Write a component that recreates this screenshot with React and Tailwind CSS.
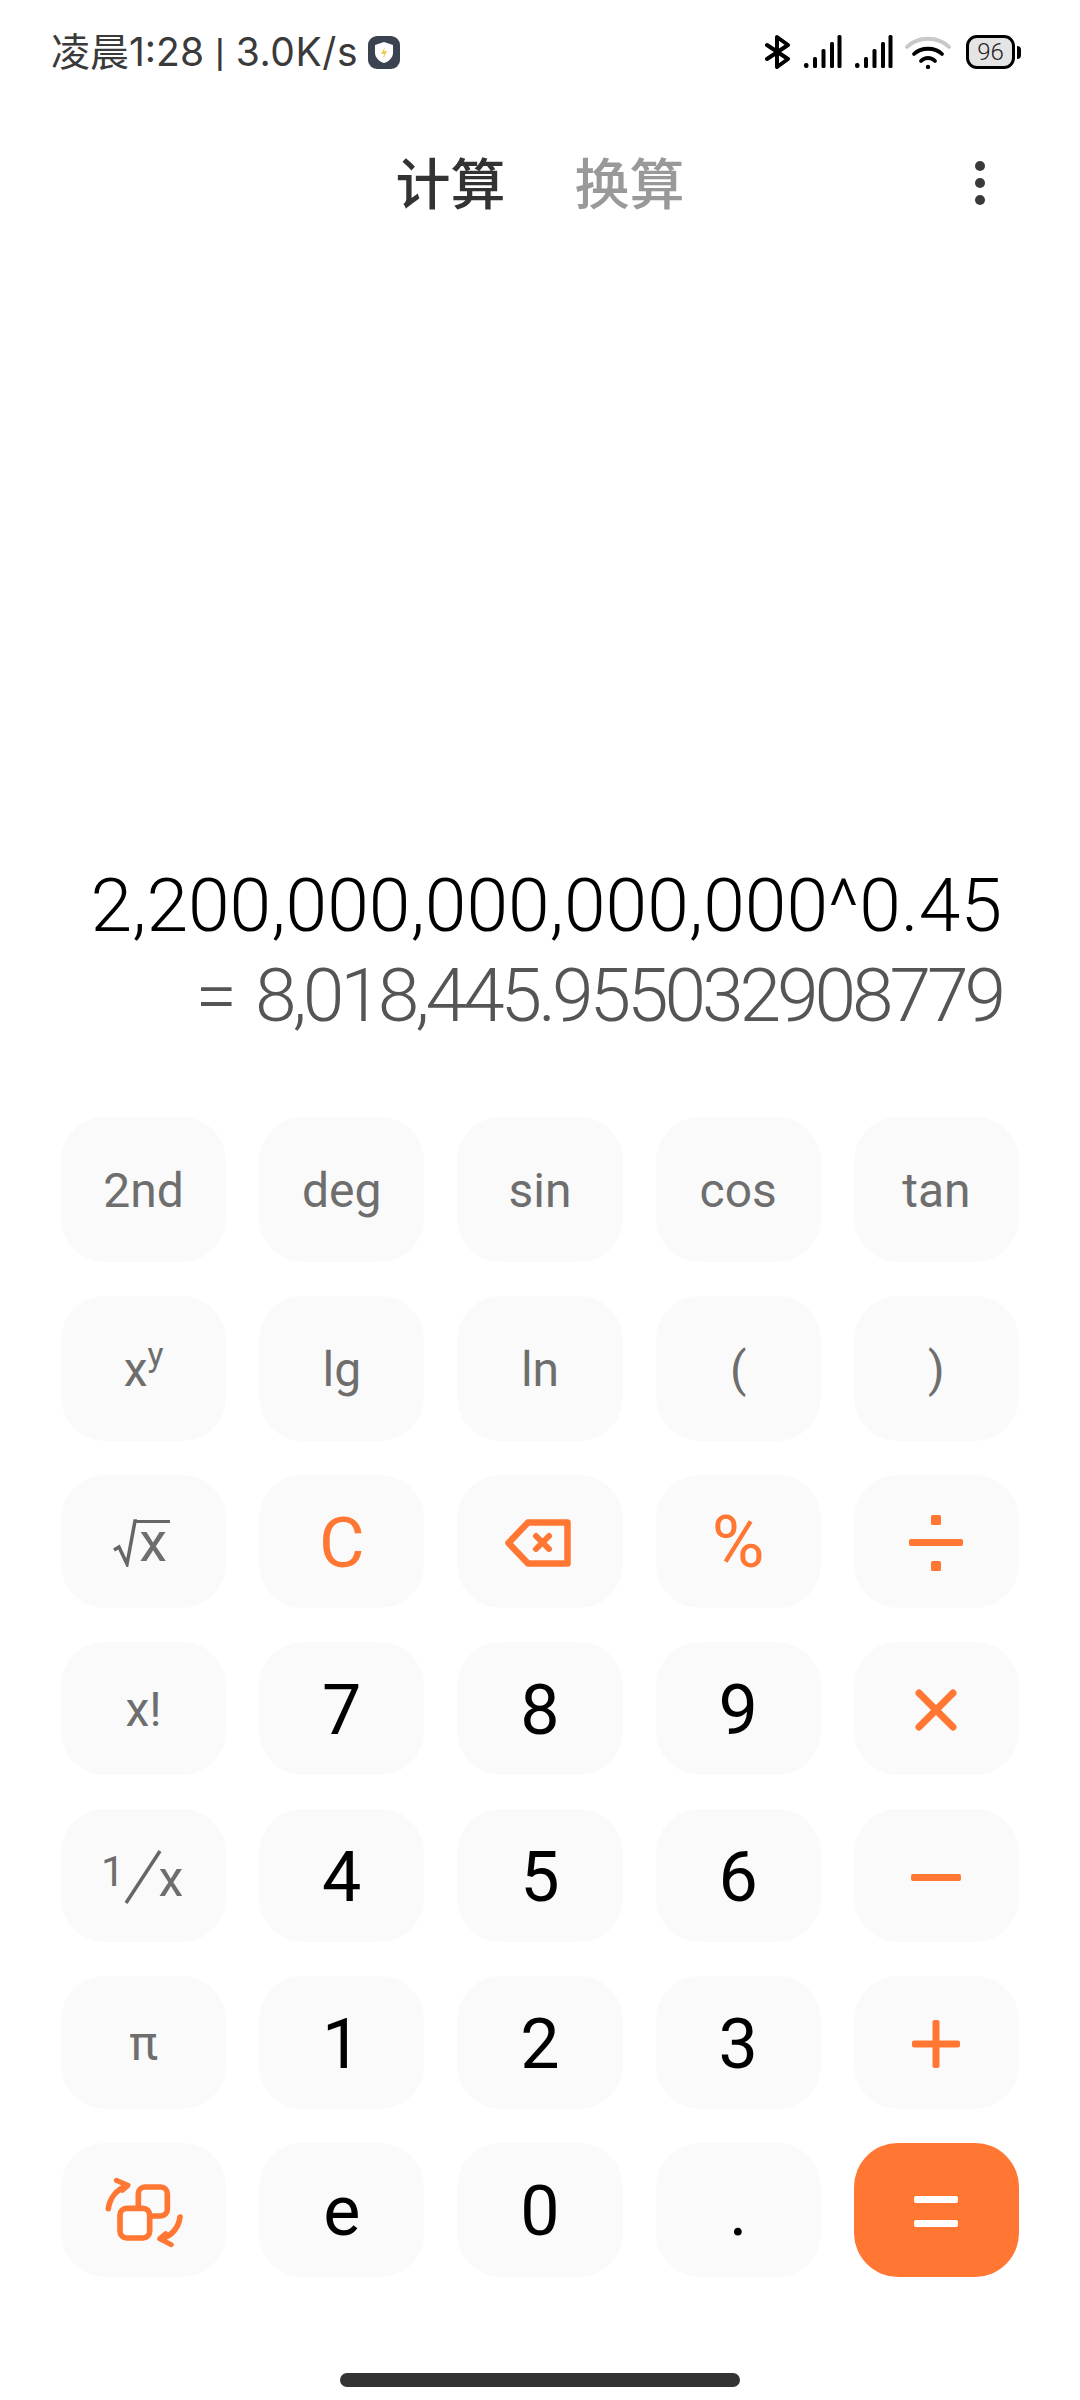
import React from "react";

const orange = "#ff7733";

function Bluetooth() {
  return (
    <svg width="26" height="34" viewBox="0 0 26 34" fill="none" stroke="#000" strokeWidth="4" strokeLinejoin="round" strokeLinecap="round">
      <path d="M2 10 L23 24 L12 32 V2 L23 10 L2 24" />
    </svg>
  );
}

function Signal() {
  return (
    <svg width="38" height="34" viewBox="0 0 38 34" fill="#000">
      <rect x="0" y="28" width="4.5" height="5" rx="2" />
      <rect x="9" y="22" width="4" height="11" rx="1.5" />
      <rect x="17.5" y="14" width="4" height="19" rx="1.5" />
      <rect x="26" y="7" width="4" height="26" rx="1.5" />
      <rect x="33.5" y="0" width="4" height="33" rx="1.5" />
    </svg>
  );
}

function Wifi() {
  return (
    <svg width="46" height="34" viewBox="0 0 46 34" fill="none" strokeLinecap="round" strokeWidth="3.8">
      <path d="M2 12 C13 1 33 1 44 12" stroke="#c8c8c8" />
      <path d="M9 19 C16 12 30 12 37 19" stroke="#000" />
      <path d="M16 26 C20 22 26 22 30 26" stroke="#000" />
      <circle cx="23" cy="32" r="2.2" fill="#000" />
    </svg>
  );
}

function Battery() {
  return (
    <div className="flex items-center">
      <div className="w-[49px] h-[34px] rounded-[11px] border-[3px] border-black bg-[#e4e4e4] flex items-center justify-center text-[24px] leading-none font-light text-[#222] font-['Roboto',sans-serif]">
        96
      </div>
      <div className="w-[4px] h-[13px] ml-[2px] bg-black rounded-r-full" />
    </div>
  );
}

function ShieldBadge() {
  return (
    <svg width="32" height="33" viewBox="0 0 32 33">
      <rect width="32" height="33" rx="9" fill="#3c4350" />
      <path d="M16 6 L25 9 V17 C25 22 20 26 16 27 C12 26 7 22 7 17 V9 Z" fill="#fff" />
      <path d="M17 11 L13 18 H16 L15 23 L19 15 H16 Z" fill="#f2c94c" />
    </svg>
  );
}

function Backspace() {
  return (
    <svg width="66" height="48" viewBox="0 0 66 48" fill="none" stroke={orange} strokeWidth="6.5" strokeLinejoin="round" strokeLinecap="round">
      <path d="M23 3.5 H62.5 V44.5 H23 L3.5 24 Z" />
      <path d="M31 17 L44 30 M44 17 L31 30" strokeWidth="6" />
    </svg>
  );
}

function Divide() {
  return (
    <svg width="54" height="56" viewBox="0 0 54 56" fill={orange}>
      <rect x="22" y="0" width="10" height="10" rx="1.5" />
      <rect x="0" y="24" width="54" height="7" rx="2" />
      <rect x="22" y="46" width="10" height="10" rx="1.5" />
    </svg>
  );
}

function Times() {
  return (
    <svg width="42" height="42" viewBox="0 0 42 42" fill="none" stroke={orange} strokeWidth="7" strokeLinecap="round">
      <path d="M4 4 L38 38 M38 4 L4 38" />
    </svg>
  );
}

function Minus() {
  return <div className="w-[50px] h-[7px] rounded-[2px] bg-[#ff7733]" />;
}

function Plus() {
  return (
    <svg width="48" height="48" viewBox="0 0 48 48" fill={orange}>
      <rect x="20.5" y="0" width="7" height="48" rx="2" />
      <rect x="0" y="20.5" width="48" height="7" rx="2" />
    </svg>
  );
}

function Equals() {
  return (
    <div className="flex flex-col gap-[17px]">
      <div className="w-[44px] h-[7px] rounded-[2px] bg-white" />
      <div className="w-[44px] h-[7px] rounded-[2px] bg-white" />
    </div>
  );
}

function SwapIcon() {
  return (
    <svg width="80" height="74" viewBox="190 160 240 220" fill="none" stroke={orange} strokeWidth="17" strokeLinecap="round" strokeLinejoin="round">
      <rect x="293" y="195" width="87" height="87" rx="20" />
      <rect x="238" y="259" width="89" height="89" rx="20" fill="#fff" />
      <path d="M203 260 C207 228 228 203 258 192" />
      <path d="M227 175 L262 190 L245 205" strokeWidth="15" />
      <path d="M418 285 C414 317 393 342 362 350" />
      <path d="M392 368 L357 350 L375 335" strokeWidth="15" />
    </svg>
  );
}

function Radical() {
  return (
    <svg width="24" height="48" viewBox="0 0 24 48" fill="none" stroke="#666666" strokeWidth="3.5">
      <path d="M1 31 L6 28 L14 45 L22 2 H24" />
    </svg>
  );
}

function Slash() {
  return (
    <svg width="38" height="54" viewBox="0 0 38 54" fill="none" stroke="#666666" strokeWidth="3.5">
      <path d="M2 53 L36 1" />
    </svg>
  );
}

function Key({ label, kind = "fn", children }) {
  const base = "flex items-center justify-center rounded-[44px] pt-[3px] font-['Roboto',sans-serif]";
  const kinds = {
    fn: "bg-[#fafafa] text-[#6e6e6e] text-[48px] font-normal",
    num: "bg-[#fafafa] text-black text-[70px] font-normal",
    op: "bg-[#fafafa] text-[#ff7733] text-[70px] font-normal",
    eq: "bg-[#ff7733]",
  };
  return (
    <button aria-label={label} className={base + " " + kinds[kind]}>
      {children ?? label}
    </button>
  );
}

export default function App() {
  return (
    <div className="w-[1080px] h-[2400px] bg-white flex flex-col font-['Roboto','Noto_Sans_CJK_SC',sans-serif]">
      {/* status bar */}
      <div className="flex items-center justify-between h-[34px] mt-[35px] pl-[51px] pr-[59px]">
        <div className="flex items-center gap-[10px] text-[39px] leading-none text-[#3a3a3a]">
          <span className="font-['Inter','Noto_Sans_CJK_SC',sans-serif]">
            凌晨1:28 <span className="font-['Roboto',sans-serif] font-medium">|</span> <span className="tracking-[0.6px]">3.0K/s</span>
          </span>
          <ShieldBadge />
        </div>
        <div className="flex items-center">
          <Bluetooth />
          <div className="ml-[13px]"><Signal /></div>
          <div className="ml-[13px]"><Signal /></div>
          <div className="ml-[12px]"><Wifi /></div>
          <div className="ml-[15px]"><Battery /></div>
        </div>
      </div>

      {/* tabs */}
      <div className="relative flex justify-center gap-[69px] mt-[73px] text-[55px] leading-[76px] font-['Noto_Sans_CJK_SC',sans-serif]">
        <span className="font-medium text-[#333333]">计算</span>
        <span className="font-medium text-[#999999]">换算</span>
        <div className="absolute right-[95px] top-[19px] flex flex-col gap-[7px]">
          <div className="w-[10px] h-[10px] rounded-full bg-[#3a3a3a]" />
          <div className="w-[10px] h-[10px] rounded-full bg-[#3a3a3a]" />
          <div className="w-[10px] h-[10px] rounded-full bg-[#3a3a3a]" />
        </div>
      </div>

      {/* display */}
      <div className="flex-1 flex flex-col justify-end items-end pr-[78px] pb-[77px] font-light">
        <div className="text-[75px] leading-[90px] text-black">2,200,000,000,000,000^0.45</div>
        <div className="text-[75px] leading-[90px] text-[#555555] flex gap-[18px]">
          <span>=</span>
          <span className="tracking-[-4.1px]">8,018,445.955032908779</span>
        </div>
      </div>

      {/* keypad */}
      <div className="grid grid-cols-5 grid-rows-[145px_145px_133px_133px_133px_133px_134px] gap-x-[33px] gap-y-[34px] mx-[61px]">
        <Key label="2nd" />
        <Key label="deg" />
        <Key label="sin" />
        <Key label="cos" />
        <Key label="tan" />

        <Key label="xʸ">
          <span>x<sup className="text-[34px] top-[-20px]">y</sup></span>
        </Key>
        <Key label="lg" />
        <Key label="ln" />
        <Key label="(" />
        <Key label=")" />

        <Key label="√x">
          <span className="flex items-start pr-[5px]">
            <Radical />
            <span className="w-[33px] h-[46px] mt-[1px] border-t-[3.5px] border-[#666666] text-[56px] leading-[38px] text-center">x</span>
          </span>
        </Key>
        <Key label="C" kind="op" />
        <Key label="backspace" kind="op"><span className="pr-[4px]"><Backspace /></span></Key>
        <Key label="%" kind="op"><span className="text-[72px]">%</span></Key>
        <Key label="divide" kind="op"><Divide /></Key>

        <Key label="x!" />
        <Key label="7" kind="num" />
        <Key label="8" kind="num" />
        <Key label="9" kind="num" />
        <Key label="multiply" kind="op"><Times /></Key>

        <Key label="1/x">
          <span className="flex items-start h-[54px] pr-[3px]">
            <span className="text-[42px] leading-[42px] mt-[1px]">1</span>
            <Slash />
            <span className="text-[50px] leading-[50px] self-end -ml-[4px]">x</span>
          </span>
        </Key>
        <Key label="4" kind="num" />
        <Key label="5" kind="num" />
        <Key label="6" kind="num" />
        <Key label="minus" kind="op"><Minus /></Key>

        <Key label="π" />
        <Key label="1" kind="num" />
        <Key label="2" kind="num" />
        <Key label="3" kind="num" />
        <Key label="plus" kind="op"><Plus /></Key>

        <Key label="swap"><SwapIcon /></Key>
        <Key label="e" kind="num" />
        <Key label="0" kind="num" />
        <Key label="." kind="num" />
        <Key label="equals" kind="eq"><Equals /></Key>
      </div>

      {/* home indicator */}
      <div className="flex justify-center mt-[96px] mb-[13px]">
        <div className="w-[400px] h-[14px] rounded-full bg-[#333333]" />
      </div>
    </div>
  );
}
